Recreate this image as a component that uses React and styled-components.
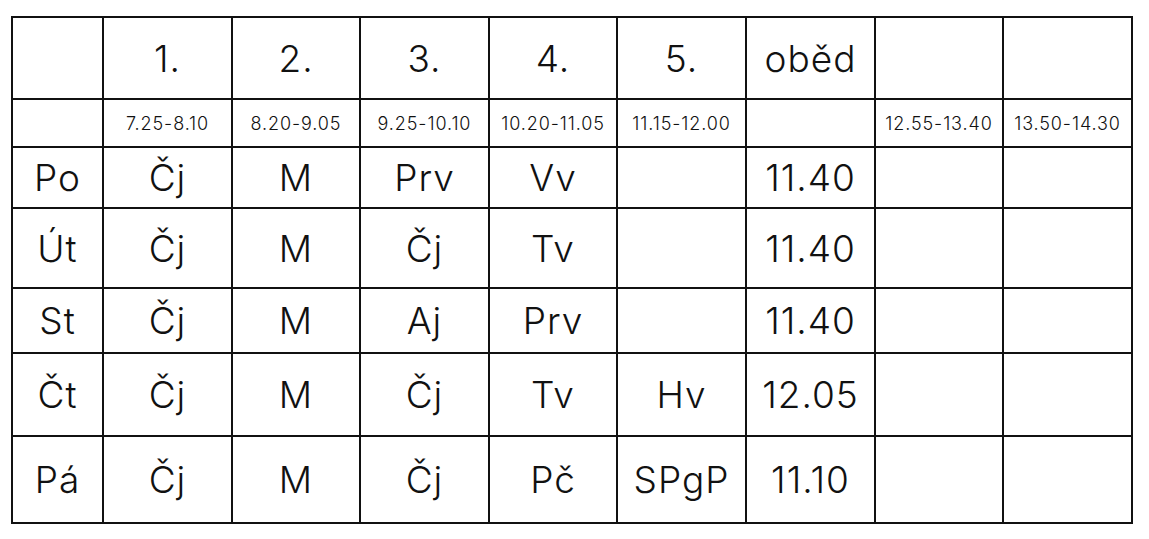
import React from 'react'
import styled, { createGlobalStyle } from 'styled-components'

const GlobalStyle = createGlobalStyle`
  body {
    margin: 0;
    background: #ffffff;
    font-family: Inter, "Open Sans", sans-serif;
    color: #111111;
  }
`

const Page = styled.div`
  padding: 16px 0 0 11px;
`

const Table = styled.table`
  border-collapse: collapse;
  width: 1122px;
  table-layout: fixed;
`

const Col = styled.col`
  width: ${p => p.$w}px;
`

const Row = styled.tr`
  height: ${p => p.$h}px;
`

const Cell = styled.td`
  border: 2px solid #111111;
  padding: 0;
  text-align: center;
  vertical-align: middle;
  font-size: ${p => (p.$small ? '18px' : '37px')};
  font-weight: 300;
  letter-spacing: ${p => (p.$small ? '0.9px' : '1px')};
  white-space: nowrap;
`

const heads = ['', '1.', '2.', '3.', '4.', '5.', 'oběd', '', '']
const times = ['', '7.25-8.10', '8.20-9.05', '9.25-10.10', '10.20-11.05', '11.15-12.00', '', '12.55-13.40', '13.50-14.30']

const days = [
  { h: 61, cells: ['Po', 'Čj', 'M', 'Prv', 'Vv', '', '11.40', '', ''] },
  { h: 80, cells: ['Út', 'Čj', 'M', 'Čj', 'Tv', '', '11.40', '', ''] },
  { h: 65, cells: ['St', 'Čj', 'M', 'Aj', 'Prv', '', '11.40', '', ''] },
  { h: 83, cells: ['Čt', 'Čj', 'M', 'Čj', 'Tv', 'Hv', '12.05', '', ''] },
  { h: 87, cells: ['Pá', 'Čj', 'M', 'Čj', 'Pč', 'SPgP', '11.10', '', ''] },
]

const widths = [91, 129, 128, 129, 128, 129, 129, 128, 129]

export default function App() {
  return (
    <Page>
      <GlobalStyle />
      <Table>
        <colgroup>
          {widths.map((w, i) => <Col key={i} $w={w} />)}
        </colgroup>
        <tbody>
          <Row $h={82}>
            {heads.map((t, i) => <Cell key={i}>{t}</Cell>)}
          </Row>
          <Row $h={48}>
            {times.map((t, i) => <Cell key={i} $small>{t}</Cell>)}
          </Row>
          {days.map(d => (
            <Row key={d.cells[0]} $h={d.h}>
              {d.cells.map((t, i) => <Cell key={i}>{t}</Cell>)}
            </Row>
          ))}
        </tbody>
      </Table>
    </Page>
  )
}
